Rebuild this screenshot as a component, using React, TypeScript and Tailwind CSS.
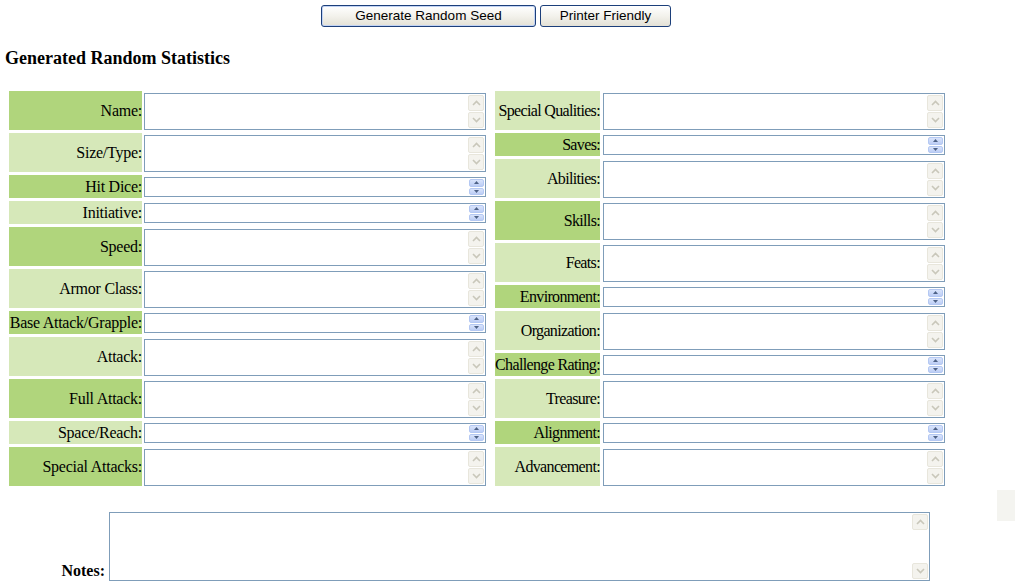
const dark = 'bg-[#b0d57c]'
const light = 'bg-[#d6e8b9]'

type Field = [string, boolean]

const leftFields: Field[] = [
    ['Name:', true],
    ['Size/Type:', true],
    ['Hit Dice:', false],
    ['Initiative:', false],
    ['Speed:', true],
    ['Armor Class:', true],
    ['Base Attack/Grapple:', false],
    ['Attack:', true],
    ['Full Attack:', true],
    ['Space/Reach:', false],
    ['Special Attacks:', true],
]

const rightFields: Field[] = [
    ['Special Qualities:', true],
    ['Saves:', false],
    ['Abilities:', true],
    ['Skills:', true],
    ['Feats:', true],
    ['Environment:', false],
    ['Organization:', true],
    ['Challenge Rating:', false],
    ['Treasure:', true],
    ['Alignment:', false],
    ['Advancement:', true],
]

function Chevron({ up }: { up?: boolean }) {
    return (
        <svg width="9" height="6" viewBox="0 0 9 6">
            <path
                d={up ? 'M1 5 L4.5 1.5 L8 5' : 'M1 1 L4.5 4.5 L8 1'}
                fill="none"
                stroke="#c9c7ba"
                strokeWidth="1.6"
            />
        </svg>
    )
}

function Tri({ up }: { up?: boolean }) {
    return (
        <svg width="5" height="3" viewBox="0 0 5 3">
            <path d={up ? 'M0 3 L2.5 0 L5 3 Z' : 'M0 0 L2.5 3 L5 0 Z'} fill="#4d6185" />
        </svg>
    )
}

function TallScroll() {
    return (
        <div className="flex flex-col justify-between w-[16px] h-full py-[1px] mr-[1px]">
            <div className="h-[16px] rounded-[2px] border border-[#e8e6dc] bg-[#f4f3ee] flex items-center justify-center">
                <Chevron up />
            </div>
            <div className="h-[16px] rounded-[2px] border border-[#e8e6dc] bg-[#f4f3ee] flex items-center justify-center">
                <Chevron />
            </div>
        </div>
    )
}

function ShortScroll() {
    return (
        <div className="flex flex-col gap-[1px] w-[15px] h-full py-[1px] mr-[1px]">
            <div className="flex-1 rounded-[2px] border border-[#b4c8f3] bg-gradient-to-b from-[#d9e4fb] to-[#bccdf5] flex items-center justify-center">
                <Tri up />
            </div>
            <div className="flex-1 rounded-[2px] border border-[#b4c8f3] bg-gradient-to-b from-[#d9e4fb] to-[#bccdf5] flex items-center justify-center">
                <Tri />
            </div>
        </div>
    )
}

function Box({ tall }: { tall: boolean }) {
    return (
        <div
            className={`w-[342px] border border-[#7f9db9] bg-white flex justify-end ${
                tall ? 'h-[37px]' : 'h-[20px]'
            }`}
        >
            {tall ? <TallScroll /> : <ShortScroll />}
        </div>
    )
}

function Column({
    fields,
    first,
    labelW,
    gap,
    track,
}: {
    fields: Field[]
    first: string
    labelW: string
    gap: string
    track: string
}) {
    return (
        <div className={`flex flex-col gap-[3px] ${track}`}>
            {fields.map(([label, tall], i) => {
                const bg = i % 2 === 0 ? first : first === dark ? light : dark
                return (
                    <div key={label} className={`flex ${gap} ${tall ? 'h-[39px]' : 'h-[23px]'}`}>
                        <div className={`${labelW} ${bg} flex items-center justify-end pt-[1px]`}>
                            <span className="whitespace-nowrap">{label}</span>
                        </div>
                        <div className="pt-[2px]">
                            <Box tall={tall} />
                        </div>
                    </div>
                )
            })}
        </div>
    )
}

export default function App() {
    return (
        <div className="relative w-[1024px] h-[588px] overflow-hidden bg-white text-black font-['Liberation_Serif',serif] text-[16px]">
            <div className="flex gap-[4px] pt-[5px] pl-[321px] font-['Liberation_Sans',sans-serif] text-[13.5px]">
                <button className="w-[215px] h-[22px] rounded-[3px] border border-[#1c3f7a] bg-gradient-to-b from-white via-[#f3f2ec] to-[#e3e1d6] shadow-[inset_0_0_0_1px_#c2d3f4]">
                    Generate Random Seed
                </button>
                <button className="w-[131px] h-[22px] rounded-[3px] border border-[#1c3f7a] bg-gradient-to-b from-white via-[#f3f2ec] to-[#e3e1d6]">
                    Printer Friendly
                </button>
            </div>

            <h2 className="mt-[21px] ml-[5px] font-bold text-[18px] leading-[20px]">
                Generated Random Statistics
            </h2>

            <div className="flex gap-[9px] ml-[9px] mt-[23px]">
                <Column fields={leftFields} first={dark} labelW="w-[133px]" gap="gap-[2px]" track="tracking-[-0.25px]" />
                <Column fields={rightFields} first={light} labelW="w-[105px]" gap="gap-[3px]" track="tracking-[-0.65px]" />
            </div>

            <div className="flex items-end gap-[4px] mt-[26px]">
                <div className="w-[105px] text-right font-bold text-[16px] leading-[20px]">
                    Notes:
                </div>
                <div className="w-[821px] h-[69px] border border-[#7f9db9] bg-white flex justify-end">
                    <TallScroll />
                </div>
            </div>

            <div className="absolute left-[997px] top-[490px] w-[18px] h-[31px] bg-[#f4f4f0]" />
        </div>
    )
}
